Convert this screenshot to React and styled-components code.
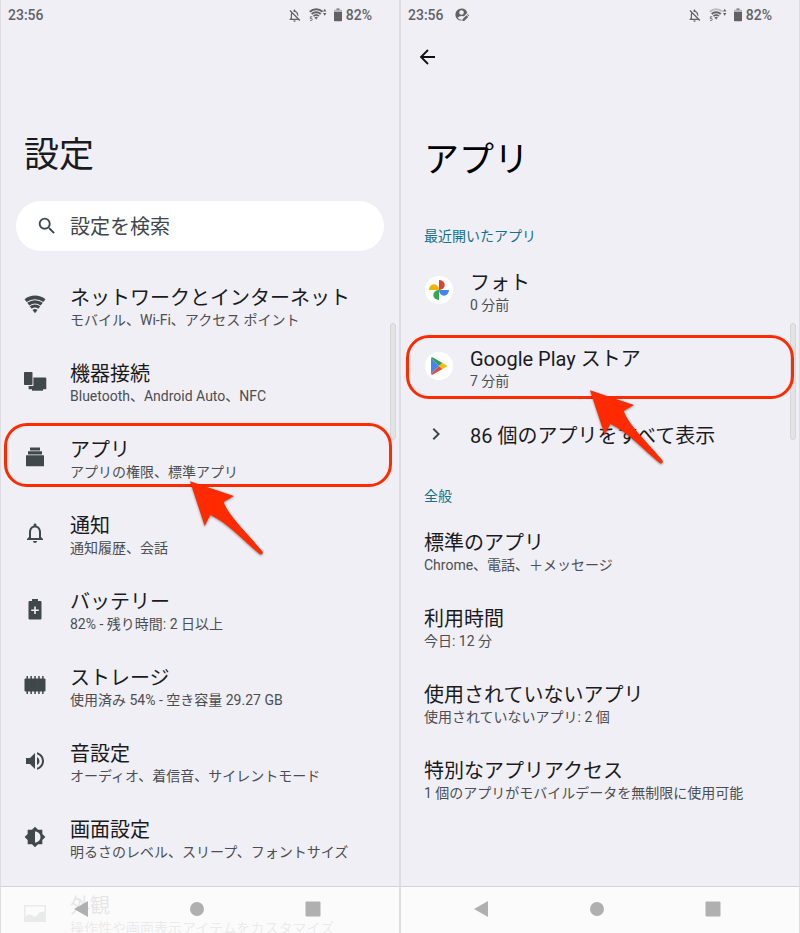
import React from 'react';
import styled, { createGlobalStyle } from 'styled-components';
import {
    MdBrightnessMedium,
    MdChevronRight,
    MdOutlineNotifications,
    MdOutlineNotificationsOff,
    MdSearch,
    MdVolumeUp
} from 'react-icons/md';

const COLORS = {
    background: '#f0eff5',
    edge: '#dedde2',
    text: '#1a1b1e',
    lightText: '#4b4e52',
    icon: '#40484c',
    status: '#626265',
    accent: '#16708a',
    mark: '#ff2a00',
    nav: '#b0b0b0'
};

const GlobalStyle = createGlobalStyle`
    * {
        box-sizing: border-box;
    }

    body {
        margin: 0;
        background: ${COLORS.background};
        font-family: Roboto, 'Noto Sans CJK JP', sans-serif;
        color: ${COLORS.text};
    }

    button {
        padding: 0;
        border: 0;
        background: none;
        font: inherit;
        color: inherit;
        text-align: left;
        cursor: pointer;
    }
`;

const Screens = styled.div`
    display: grid;
    grid-template-columns: 1fr 1fr;
    height: 100vh;
`;

const Phone = styled.section`
    position: relative;
    overflow: hidden;
    border-left: 1px solid ${COLORS.edge};
    border-right: 1px solid ${COLORS.edge};
`;

const Status = styled.div`
    display: flex;
    align-items: center;
    height: 30px;
    padding: 0 27px 0 7px;
    font-size: 14px;
    font-weight: 500;
    color: ${COLORS.status};

    svg {
        flex: none;
    }
`;

const Clock = styled.time`
    margin-right: 11px;
`;

const StatusIcons = styled.div`
    display: flex;
    align-items: center;
    gap: 7px;
    margin-left: auto;
`;

const Battery = styled.span`
    display: flex;
    align-items: center;
    gap: 4px;
`;

const Toolbar = styled.div`
    height: 56px;
    padding: 16px;

    svg {
        display: block;
    }
`;

const Title = styled.h1`
    margin: 0;
    padding: 0 23px;
    font-size: 35px;
    line-height: 48px;
    font-weight: 400;
    color: ${({ $dark }) => ($dark ? '#000' : COLORS.text)};
`;

const SettingsHeader = styled.header`
    padding-top: 102px;
`;

const AppsHeader = styled.header`
    ${Title} {
        margin-top: 51px;
    }
`;

const Search = styled.label`
    display: flex;
    align-items: center;
    gap: 12px;
    height: 50px;
    margin: 21px 15px 18px;
    padding: 0 20px;
    border-radius: 25px;
    background: #fff;
    color: ${COLORS.icon};

    svg {
        flex: none;
    }
`;

const SearchInput = styled.input`
    flex: 1;
    min-width: 0;
    padding: 2px 0 0;
    border: 0;
    outline: 0;
    background: none;
    font: inherit;
    font-size: 20px;
    color: ${COLORS.text};

    &::placeholder {
        color: ${COLORS.icon};
        opacity: 1;
    }
`;

const SectionTitle = styled.h2`
    margin: 0;
    padding: 0 23px;
    font-size: 14px;
    line-height: 20px;
    font-weight: 400;
    color: ${COLORS.accent};
`;

const List = styled.ul`
    margin: 0;
    padding: 0;
    list-style: none;
`;

const Recent = styled.div`
    padding: 41px 0 20px;

    ${List} {
        margin-top: 8px;
    }
`;

const General = styled.div`
    ${List} {
        margin-top: 8px;
    }
`;

const Item = styled.li`
    position: relative;
`;

const Row = styled.button`
    display: flex;
    align-items: center;
    width: 100%;
    height: ${({ $short }) => ($short ? 60 : 76)}px;
    padding: 0 23px;
`;

const Lead = styled.span`
    flex: none;
    display: flex;
    align-items: center;
    width: 46px;
    padding-bottom: 4px;
    color: ${COLORS.icon};
`;

const IconBox = styled.span`
    display: flex;
    align-items: center;
    justify-content: center;
    width: 22px;
    height: 24px;

    svg {
        flex: none;
    }
`;

const Avatar = styled.span`
    display: flex;
    align-items: center;
    justify-content: center;
    width: 28px;
    height: 28px;
    margin-left: 1px;
    border-radius: 50%;
    background: #fff;
`;

const Label = styled.span`
    display: block;
    font-size: 20px;
    line-height: 26px;
    white-space: nowrap;
`;

const Summary = styled.span`
    display: block;
    font-size: 14px;
    line-height: 18px;
    white-space: nowrap;
    color: ${COLORS.lightText};
`;

const Outline = styled.span`
    position: absolute;
    z-index: 1;
    top: ${({ $top }) => $top}px;
    left: ${({ $left }) => $left}px;
    right: ${({ $right }) => $right}px;
    height: 64px;
    border: 3px solid ${COLORS.mark};
    border-radius: 23px;
    pointer-events: none;
`;

const Pointer = styled.svg`
    position: absolute;
    z-index: 2;
    top: 53px;
    left: 179px;
    filter: drop-shadow(0 1px 1px rgba(0, 0, 0, 0.4));
    pointer-events: none;
`;

const Scrollbar = styled.div`
    position: absolute;
    top: 323px;
    right: 3px;
    width: 6px;
    height: 117px;
    border: 1px solid #d6d6da;
    border-radius: 3px;
    background: #e3e3e6;
`;

const NavBar = styled.nav`
    position: absolute;
    z-index: 3;
    left: 0;
    right: 0;
    bottom: 0;
    display: flex;
    align-items: center;
    justify-content: center;
    gap: 100px;
    height: 47px;
    padding: 0 6px 3px 0;
    border-top: 1px solid #d4d4d6;
    background: rgba(252, 252, 252, 0.9);

    svg {
        display: block;
    }
`;

const WifiIcon = () => (
    <svg width="22" height="20" viewBox="0 0 22 20" fill="none" stroke="currentColor">
        <path d="M1.600 5.600A15.500 15.500 0 0 1 20.400 5.600" strokeWidth="3.600" />
        <path d="M4.300 9.200A11 11 0 0 1 17.700 9.200" strokeWidth="3.500" />
        <path d="M6.700 12.500A6.900 6.900 0 0 1 15.300 12.500" strokeWidth="3.200" />
        <path d="M8.500 15A4 4 0 0 1 13.500 15L11 18.200Z" fill="currentColor" stroke="none" />
    </svg>
);

const DevicesIcon = () => (
    <svg width="24" height="24" viewBox="0 0 24 24" fill="currentColor">
        <rect x="1" y="3" width="8.500" height="13" rx="0.800" />
        <path d="M10.400 8.500h12q0.900 0 0.900 0.900v10q0 0.900-0.900 0.900H6.500q-0.900 0-0.900-0.900V17h4.800z" />
        <path d="M9 20h11v1.700H9z" />
    </svg>
);

const AppsIcon = () => (
    <svg width="20" height="20" viewBox="0 0 20 20" fill="currentColor">
        <path d="M5 0.500h10V3.500H5zM3 4.300h14V7.500H3zM1.500 8.300h17q0.500 0 0.500 0.500v9.900q0 0.500-0.500 0.500h-17q-0.500 0-0.500-0.500V8.800q0-0.500 0.500-0.500z" />
    </svg>
);

const BatteryPlusIcon = () => (
    <svg width="14" height="22" viewBox="0 0 14 22" fill="currentColor">
        <path
            fillRule="evenodd"
            d="M4 1h6v2h2.500a1 1 0 0 1 1 1v16.500a1 1 0 0 1-1 1h-11a1 1 0 0 1-1-1V4a1 1 0 0 1 1-1H4zM6.200 8.500v3H3.200v1.600h3v3h1.600v-3h3v-1.600h-3v-3z"
        />
    </svg>
);

const StorageIcon = () => (
    <svg width="22" height="20" viewBox="0 0 22 20" fill="currentColor">
        <rect x="0.500" y="3.500" width="21" height="13" rx="1" />
        <path d="M2.500 1h1.500v18H2.500zM6.400 1h1.500v18H6.400zM10.300 1h1.500v18h-1.500zM14.200 1h1.500v18h-1.500zM18.100 1h1.500v18h-1.500z" />
    </svg>
);

const WallpaperIcon = () => (
    <svg width="22" height="17" viewBox="0 0 22 17" fill="currentColor">
        <path fillRule="evenodd" d="M0 0h22v17H0zM1.500 1.500V12Q5 8 8 10.500T13 10Q16 6 20.500 7V1.500z" />
    </svg>
);

const BackIcon = () => (
    <svg width="22" height="22" viewBox="0 0 22 22" fill="none" stroke="#111" strokeWidth="1.800">
        <path d="M18 11H4.500M11 4L4 11l7 7" />
    </svg>
);

const ProfileEditIcon = () => (
    <svg width="14" height="14" viewBox="0 0 14 14" fill="currentColor">
        <path
            fillRule="evenodd"
            d="M6.500 0.500A6 6 0 0 1 12.300 4.800L9 8.200Q7.500 8 6.500 8 4 8 2.600 9.800 4 11.700 6.500 11.800V12.800A6.150 6.150 0 0 1 6.500 0.500zM6.500 2.200A2.300 2.300 0 1 0 6.500 6.800 2.300 2.300 0 1 0 6.500 2.200z"
        />
        <path d="M7.500 11.300l4-4 1.700 1.700-4 4H7.500zM12.100 6.700l0.600-0.600 1.200 1.200v0.500l-0.300 0.500z" />
    </svg>
);

const StatusWifiIcon = ({ weak }) => (
    <svg width="18" height="14" viewBox="0 0 18 14" fill="none" stroke="currentColor">
        <path d="M0.800 3.800A9.500 9.500 0 0 1 13.600 3.800" strokeWidth="2" opacity={weak ? 0.35 : 1} />
        <path d="M2.700 6A6.700 6.700 0 0 1 11.700 6" strokeWidth="2" />
        <path d="M4.500 8.100A4 4 0 0 1 9.900 8.100" strokeWidth="1.800" />
        <path d="M5.500 9.300Q7.200 8.200 8.900 9.300L7.200 11.800z" fill="currentColor" stroke="none" />
        <path d="M3.300 8.800H1.300v1.600h1q1 0.200 1 1t-1 1H1" strokeWidth="0.900" />
        <path d="M15.700 0.800l1.700 2.700h-3.400zM15.700 7.800l1.700-2.700h-3.400z" fill="currentColor" stroke="none" />
    </svg>
);

const StatusBatteryIcon = () => (
    <svg width="8" height="14" viewBox="0 0 8 14" fill="currentColor">
        <path opacity="0.4" d="M0 1.800h8V4H0z" />
        <path d="M2.500 0.500h3v1.300h-3zM0 4h8v8.500q0 0.800-0.800 0.800H0.800q-0.800 0-0.800-0.800z" />
    </svg>
);

const PhotosIcon = () => (
    <svg width="22" height="22" viewBox="0 0 22 22">
        <path d="M11 11V1a5.700 5 0 0 1 0 10z" fill="#db4437" />
        <path d="M11 11h10a5 5.700 0 0 1-10 0z" fill="#4285f4" />
        <path d="M11 11v10a5.700 5 0 0 1 0-10z" fill="#34a853" />
        <path d="M11 11H1a5 5.700 0 0 1 10 0z" fill="#f4b400" />
    </svg>
);

const PlayIcon = () => (
    <svg width="18" height="20" viewBox="0 0 18 20">
        <path d="M1 2v16l8-8z" fill="#4285f4" />
        <path d="M1 2Q1.500 0.800 3 1.500L12.500 7 9 10z" fill="#2f9e55" />
        <path d="M1 18q0.500 1.200 2 0.500L12.500 13 9 10z" fill="#e04a3f" />
        <path d="M12.500 7l4 2.200q0.900 0.800 0 1.600l-4 2.200L9 10z" fill="#fbbc04" />
    </svg>
);

const SETTINGS = [
    { icon: <WifiIcon />, label: 'ネットワークとインターネット', summary: 'モバイル、Wi-Fi、アクセス ポイント' },
    { icon: <DevicesIcon />, label: '機器接続', summary: 'Bluetooth、Android Auto、NFC' },
    { icon: <AppsIcon />, label: 'アプリ', summary: 'アプリの権限、標準アプリ', marked: true },
    { icon: <MdOutlineNotifications size={24} />, label: '通知', summary: '通知履歴、会話' },
    { icon: <BatteryPlusIcon />, label: 'バッテリー', summary: '82% - 残り時間: 2 日以上' },
    { icon: <StorageIcon />, label: 'ストレージ', summary: '使用済み 54% - 空き容量 29.27 GB' },
    { icon: <MdVolumeUp size={24} />, label: '音設定', summary: 'オーディオ、着信音、サイレントモード' },
    { icon: <MdBrightnessMedium size={22} />, label: '画面設定', summary: '明るさのレベル、スリープ、フォントサイズ' },
    { icon: <WallpaperIcon />, label: '外観', summary: '操作性や画面表示アイテムをカスタマイズ' }
];

const GENERAL = [
    { label: '標準のアプリ', summary: 'Chrome、電話、＋メッセージ' },
    { label: '利用時間', summary: '今日: 12 分' },
    { label: '使用されていないアプリ', summary: '使用されていないアプリ: 2 個' },
    { label: '特別なアプリアクセス', summary: '1 個のアプリがモバイルデータを無制限に使用可能' }
];

const StatusBar = ({ children, weak }) => (
    <Status>
        <Clock>23:56</Clock>
        {children}
        <StatusIcons>
            <MdOutlineNotificationsOff size={15} />
            <StatusWifiIcon weak={weak} />
            <Battery>
                <StatusBatteryIcon />
                82%
            </Battery>
        </StatusIcons>
    </Status>
);

const ListItem = ({ icon, label, summary, short, children }) => (
    <Item>
        <Row type="button" $short={short}>
            {icon && <Lead>{icon}</Lead>}
            <span>
                <Label>{label}</Label>
                {summary && <Summary>{summary}</Summary>}
            </span>
        </Row>
        {children}
    </Item>
);

const Mark = ({ top, left, right }) => (
    <>
        <Outline $top={top} $left={left} $right={right} />
        <Pointer width="90" height="90" viewBox="0 0 270 270" fill={COLORS.mark}>
            <path d="M30 22L162 66L131 84C145 125 200 175 248 233Q250 243 240 241C190 200 140 145 91 123L74 156Z" />
        </Pointer>
    </>
);

const Navigation = () => (
    <NavBar>
        <button type="button" aria-label="戻る">
            <svg width="16" height="16" viewBox="0 0 16 16" fill={COLORS.nav}>
                <path d="M1 8L15 0v16z" />
            </svg>
        </button>
        <button type="button" aria-label="ホーム">
            <svg width="16" height="16" viewBox="0 0 16 16" fill={COLORS.nav}>
                <circle cx="8" cy="8" r="7" />
            </svg>
        </button>
        <button type="button" aria-label="履歴">
            <svg width="16" height="16" viewBox="0 0 16 16" fill={COLORS.nav}>
                <rect x="0.500" y="0.500" width="15" height="15" rx="1" />
            </svg>
        </button>
    </NavBar>
);

const SettingsScreen = () => (
    <Phone>
        <StatusBar />
        <SettingsHeader>
            <Title>設定</Title>
            <Search>
                <MdSearch size={22} />
                <SearchInput type="search" placeholder="設定を検索" aria-label="設定を検索" />
            </Search>
        </SettingsHeader>
        <List>
            {SETTINGS.map(({ icon, label, summary, marked }) => (
                <ListItem key={label} icon={<IconBox>{icon}</IconBox>} label={label} summary={summary}>
                    {marked && <Mark top={2} left={3} right={7} />}
                </ListItem>
            ))}
        </List>
        <Scrollbar />
        <Navigation />
    </Phone>
);

const AppsScreen = () => (
    <Phone>
        <StatusBar weak>
            <ProfileEditIcon />
        </StatusBar>
        <AppsHeader>
            <Toolbar>
                <button type="button" aria-label="戻る">
                    <BackIcon />
                </button>
            </Toolbar>
            <Title $dark>アプリ</Title>
        </AppsHeader>
        <Recent>
            <SectionTitle>最近開いたアプリ</SectionTitle>
            <List>
                <ListItem icon={<Avatar><PhotosIcon /></Avatar>} label="フォト" summary="0 分前" />
                <ListItem icon={<Avatar><PlayIcon /></Avatar>} label="Google Play ストア" summary="7 分前">
                    <Mark top={5} left={5} right={5} />
                </ListItem>
                <ListItem short icon={<MdChevronRight size={24} />} label="86 個のアプリをすべて表示" />
            </List>
        </Recent>
        <General>
            <SectionTitle>全般</SectionTitle>
            <List>
                {GENERAL.map((item) => (
                    <ListItem key={item.label} {...item} />
                ))}
            </List>
        </General>
        <Scrollbar />
        <Navigation />
    </Phone>
);

const App = () => (
    <>
        <GlobalStyle />
        <Screens>
            <SettingsScreen />
            <AppsScreen />
        </Screens>
    </>
);

export default App;
